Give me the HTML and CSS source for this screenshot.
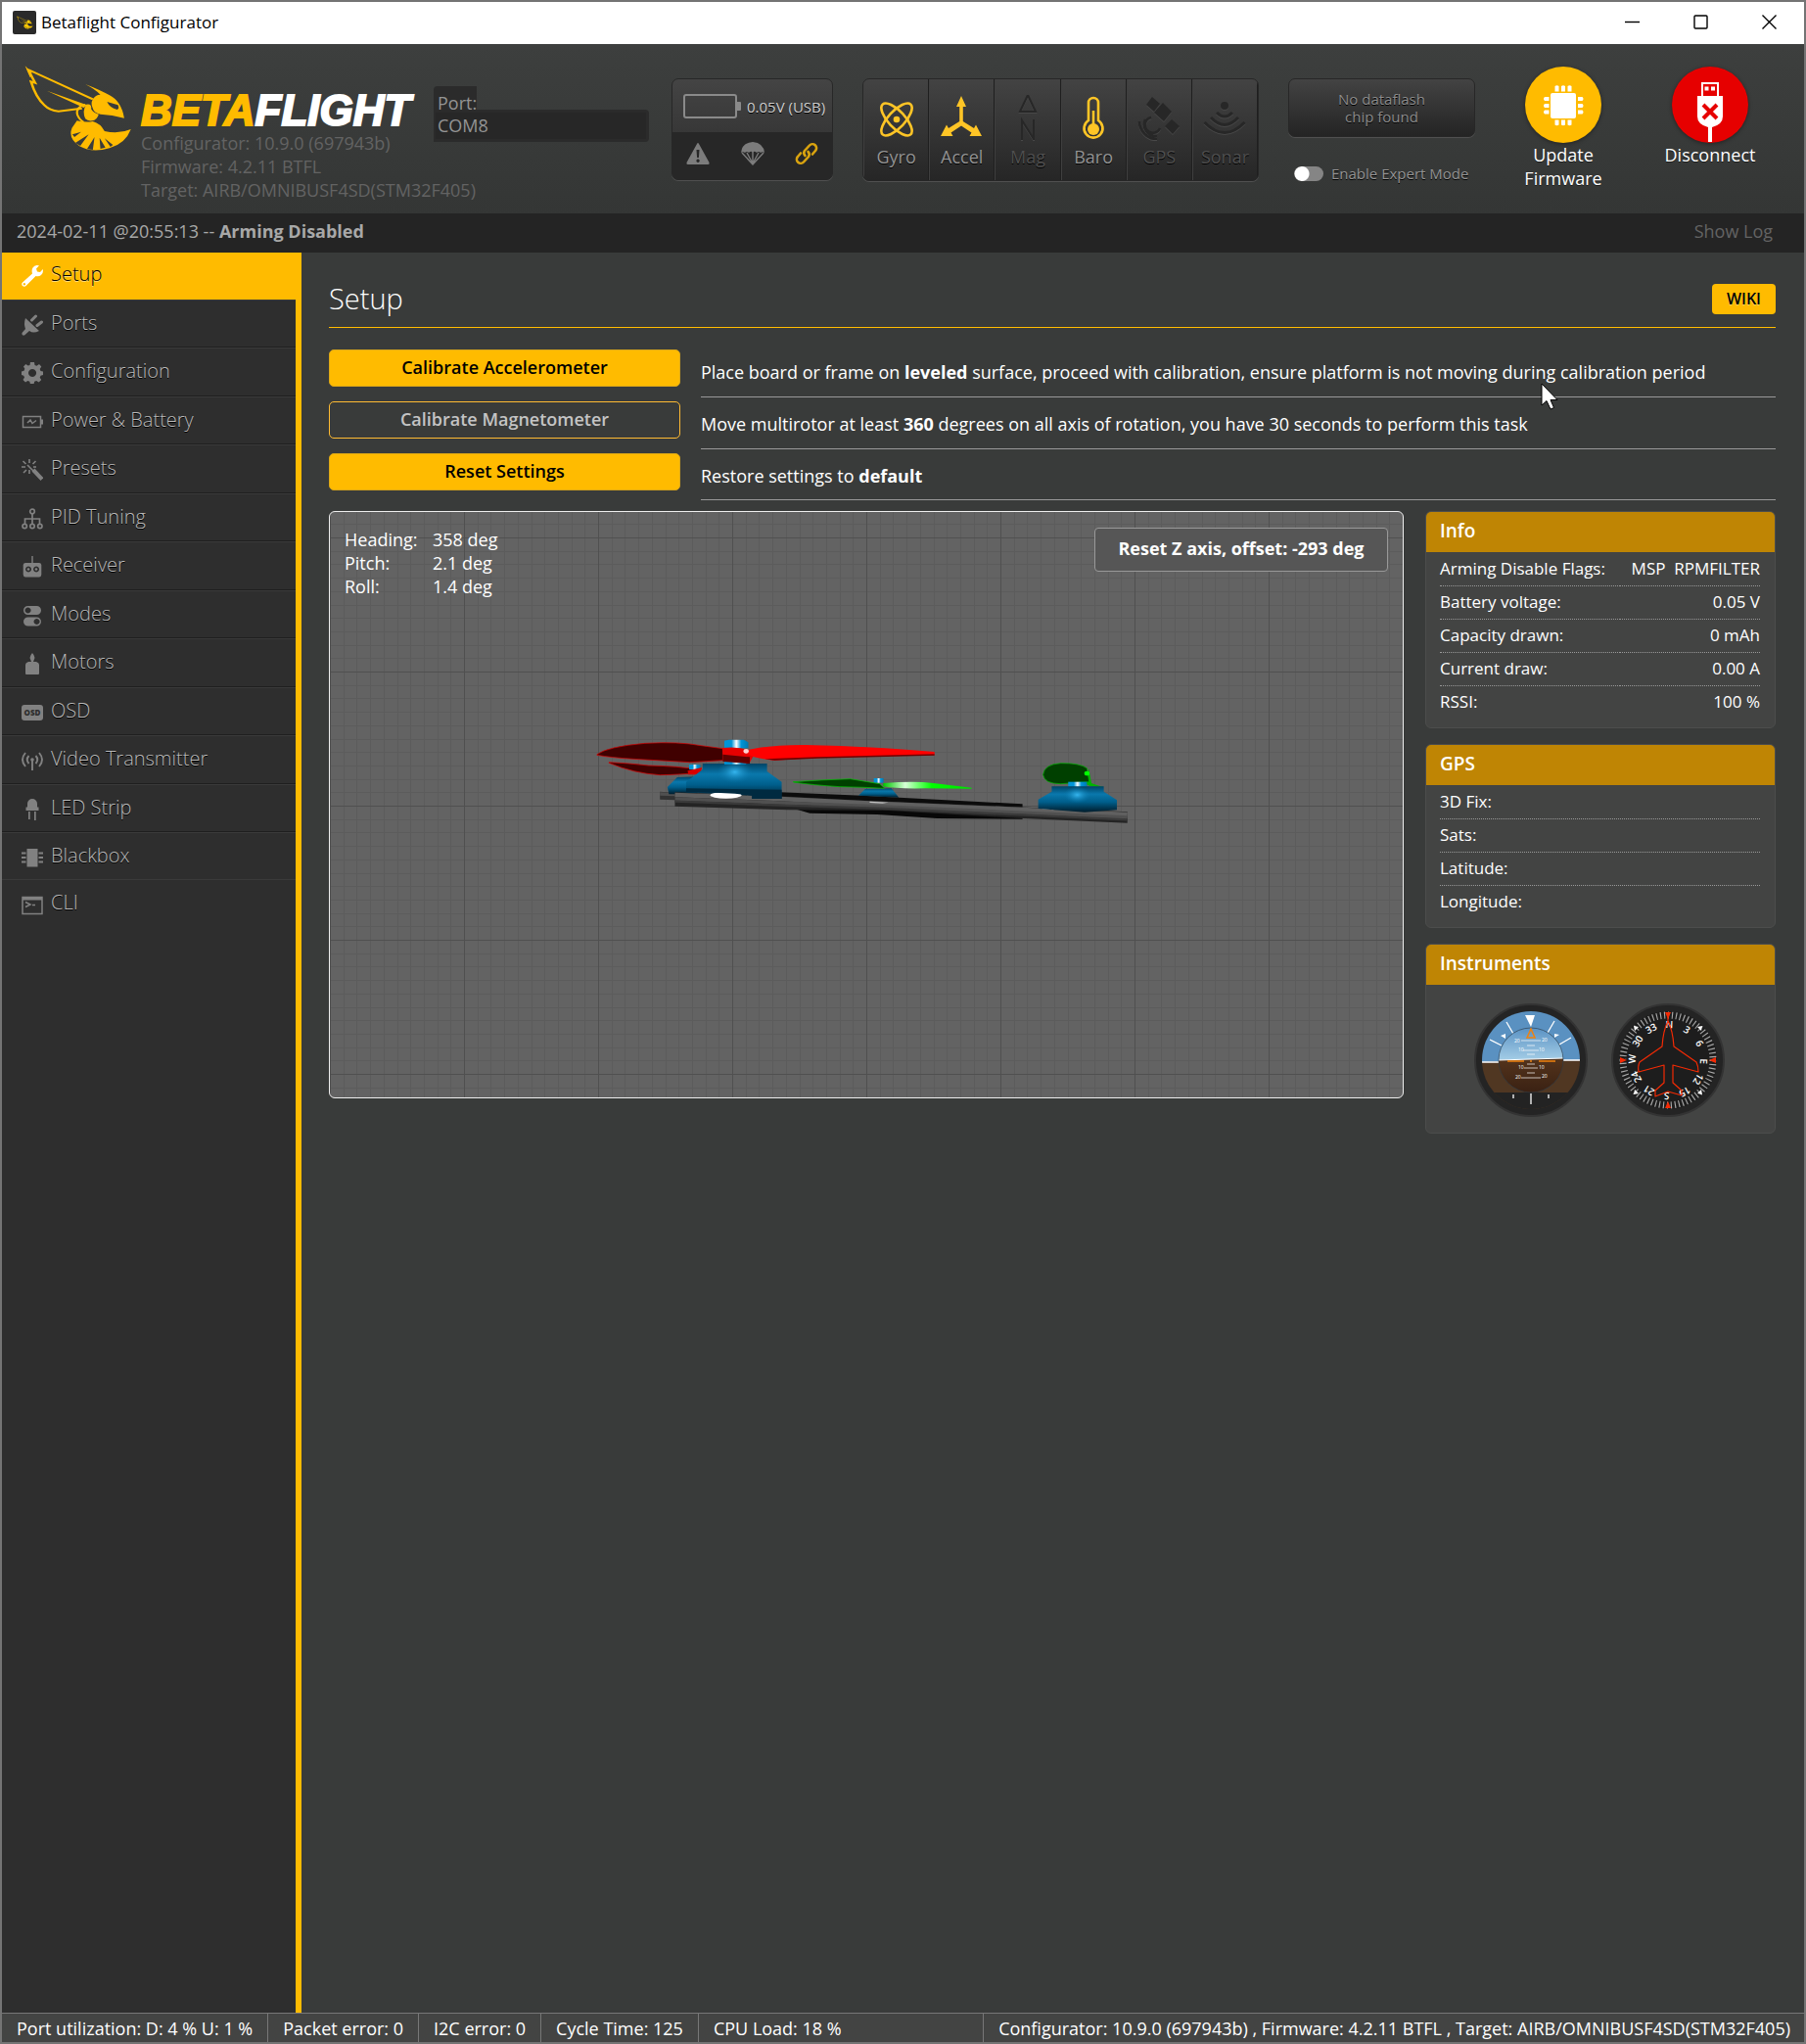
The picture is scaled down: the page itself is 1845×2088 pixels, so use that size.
FILE: index.html
```html
<!DOCTYPE html>
<html lang="en">
<head>
<meta charset="utf-8">
<meta name="viewport" content="width=device-width, initial-scale=1">
<title>Betaflight Configurator</title>
<link rel="stylesheet" href="styles.css">
</head>
<body>
<svg class="defs" aria-hidden="true">
  <symbol id="bee" viewBox="0 0 112 90">
    <g transform="translate(-24 -66) scale(.4273 .33333)">
      <path fill="none" stroke="currentColor" stroke-width="6" d="M67 213L84 254L74 250Q86 300 106 322Q118 338 140 341L196 332M67 213L222 304"/>
      <path d="M60 202L76 222L72 238ZM112 278L208 322L200 330ZM204 258Q240 276 262 292Q290 310 297 362Q268 352 240 350Q224 345 222 332Q216 318 222 304Q228 290 240 290Q228 274 204 258Z"/>
      <path d="M206 320Q220 316 218 334Q222 346 236 350Q232 368 220 370Q210 372 204 364Q196 340 206 320Z"/>
      <path fill="none" stroke="currentColor" stroke-width="5" d="M204 320Q180 328 185 352Q190 368 200 374"/>
      <path d="M184 370Q206 376 222 372Q240 378 250 402Q284 412 313 396Q300 440 262 454Q220 470 190 448Q162 424 172 392Z"/>
      <g class="bee-gap"><path d="M256 312L282 322Q286 334 280 336Q262 330 256 312ZM173 412L194 404L178 420ZM180 438L212 412L192 447ZM208 457L226 420L222 459ZM240 456L238 422L252 452ZM264 450L250 424L270 444Z"/></g>
    </g>
  </symbol>
</svg>

<div class="window">
  <div class="titlebar">
    <span class="app-icon"><svg width="17" height="14"><use href="#bee"/></svg></span>
    <span class="app-title">Betaflight Configurator</span>
    <div class="window-controls">
      <button type="button" aria-label="Minimize"><svg width="16" height="16" viewBox="0 0 16 16"><path d="M0 7.5h15"/></svg></button>
      <button type="button" aria-label="Maximize"><svg width="16" height="16" viewBox="0 0 16 16"><rect x="1" y="1" width="13" height="13" rx="1"/></svg></button>
      <button type="button" aria-label="Close"><svg width="16" height="16" viewBox="0 0 16 16"><path d="M.5.5l14 14M14.500.5l-14 14"/></svg></button>
    </div>
  </div>

  <header class="header">
    <div class="brand">
      <svg class="bee" width="112" height="90"><use href="#bee"/></svg>
      <div class="brand-text">
        <div class="wordmark">BETA<span>FLIGHT</span></div>
        <div class="version">Configurator: 10.9.0 (697943b)<br>Firmware: 4.2.11 BTFL<br>Target: AIRB/OMNIBUSF4SD(STM32F405)</div>
      </div>
    </div>

    <div class="port">
      <label for="port">Port:</label>
      <input id="port" type="text" value="COM8" readonly>
    </div>

    <div class="status">
      <div class="battery">
        <div class="battery-top">
          <svg width="60" height="28" viewBox="0 0 60 28"><rect x="2" y="2" width="53" height="23" rx="2" fill="none" stroke="#8a8a8a" stroke-width="2"/><path fill="#8a8a8a" d="M56 9h3q1 0 1 1v7q0 1-1 1h-3z"/></svg>
          <span>0.05V (USB)</span>
        </div>
        <div class="battery-bottom">
          <svg width="24" height="24" viewBox="0 0 24 24" fill="#7c7c7c"><path fill-rule="evenodd" d="M11 2q1-2 2 0l10.500 19q.5 2-1 2h-21q-1.500 0-1-2zM10.500 8l.6 8h1.800l.6-8zM12 17.500a1.700 1.700 0 1 0 .1 0z"/></svg>
          <svg width="24" height="24" viewBox="0 0 24 24" fill="#7c7c7c"><path d="M0 11Q1 1 12 0Q23 1 24 11Q22 9.500 20 11Q18 9 16 11Q14 9 12 10.500Q10 9 8 11Q6 9 4 11Q2 9.500 0 11Z"/><path fill="none" stroke="#7c7c7c" stroke-width="1.400" d="M1 11L12 23L23 11M6 11L12 22M18 11L12 22M12 10v13"/></svg>
          <svg width="24" height="24" viewBox="0 0 24 24" fill="none" stroke="#d9a30f" stroke-width="2.600" stroke-linecap="round"><path d="M10.500 14a4 4 0 0 1-.5-5l5-5.500a4 4 0 0 1 6 5.500l-3 3.500"/><path d="M13.500 10a4 4 0 0 1 .5 5l-5 5.500a4 4 0 0 1-6-5.500l3-3.500"/></svg>
        </div>
      </div>

      <ul class="sensors">
        <li class="on"><svg viewBox="0 0 44 46" fill="none" stroke="currentColor" stroke-width="2.600"><ellipse cx="22" cy="25" rx="8.500" ry="21" transform="rotate(43 22 25)"/><ellipse cx="22" cy="25" rx="8.500" ry="21" transform="rotate(-43 22 25)"/><circle cx="22" cy="25" r="3.300" fill="currentColor" stroke="none"/></svg>Gyro</li>
        <li class="on"><svg viewBox="0 0 44 46" fill="currentColor"><path d="M21 1L26 12H22.800V27L34 34L36 30.500L42 42H29.500L31.500 38.500L21 31.500L10.500 38.500L12.500 42H0L6 30.500L8 34L19.200 27V12H16Z"/></svg>Accel</li>
        <li><svg viewBox="0 0 44 46" fill="none" stroke="currentColor" stroke-width="2"><path d="M22 0L30 17H14ZM16 46V26L28 45V25"/></svg>Mag</li>
        <li class="on"><svg viewBox="0 0 44 46" fill="none" stroke="currentColor" stroke-width="2.600"><path d="M17 8a5 5 0 0 1 10 0V26a9.500 9.500 0 1 1-10 0Z"/><path d="M22 16V30"/><circle cx="22" cy="35" r="6" fill="currentColor" stroke="none"/></svg>Baro</li>
        <li><svg viewBox="0 0 44 46" fill="currentColor"><path d="M15 2L23 9L17 17L9 10ZM26 8L35 17L27 27L17 18ZM35 25L43 32L36 40L28 32Z"/><path fill="none" stroke="currentColor" stroke-width="2.600" d="M14 23a8 8 0 1 0 9 11M8 25a12 12 0 0 0 12 17M2 27a18 18 0 0 0 18 18"/></svg>GPS</li>
        <li><svg viewBox="0 0 44 46" fill="none" stroke="currentColor" stroke-width="3"><circle cx="22" cy="11" r="4" fill="currentColor" stroke="none"/><path d="M14 18Q22 26 30 18M8 23Q22 38 36 23M1.500 28Q22 49 42.500 28"/></svg>Sonar</li>
      </ul>

      <div class="dataflash">
        <div class="dataflash-box">No dataflash<br>chip found</div>
        <label class="expert"><input type="checkbox"> <span>Enable Expert Mode</span></label>
      </div>

      <button type="button" class="round-action">
        <svg width="78" height="78" viewBox="0 0 78 78"><circle cx="39" cy="39" r="39" fill="#ffbb00"/><g fill="#fff"><rect x="26" y="27" width="26" height="26" rx="2"/><path d="M30.500 20q2-1.500 4 0v5.500h-4zM37 20q2-1.500 4 0v5.500h-4zM43.500 20q2-1.500 4 0v5.500h-4zM30.500 59.500q2 1.500 4 0v-5h-4zM37 59.500q2 1.500 4 0v-5h-4zM43.500 59.500q2 1.500 4 0v-5h-4zM20 31q-2 2 0 4h4.500v-4zM20 38q-2 2 0 4h4.500v-4zM20 44.500q-2 2 0 4h4.500v-4zM58.500 31q2 2 0 4h-4.500v-4zM58.500 38q2 2 0 4h-4.500v-4zM58.500 44.500q2 2 0 4h-4.500v-4z"/></g></svg>
        Update<br>Firmware
      </button>
      <button type="button" class="round-action">
        <svg width="78" height="78" viewBox="0 0 78 78"><circle cx="39" cy="39" r="39" fill="#e60000"/><g fill="#fff"><path fill-rule="evenodd" d="M30 16h18v14h-18zM32 18v12h14v-12z"/><path d="M33.500 20.500h4v4h-4zM40 20.500h4v4h-4z"/><path d="M26 30h26v21q0 8-11 11v15h-4v-15q-11-3-11-11z"/></g><path stroke="#e60000" stroke-width="4" d="M32 39l14 14M46 39l-14 14"/></svg>
        Disconnect
      </button>
    </div>
  </header>

  <div class="log">
    <p>2024-02-11 @20:55:13 -- <strong>Arming Disabled</strong></p>
    <a href="#log">Show Log</a>
  </div>

  <div class="workspace">
    <nav class="tabs">
      <ul>
        <li class="active"><a href="#setup"><svg viewBox="0 0 22 22"><path fill-rule="evenodd" d="M15.500 0L18 .3L15 3.500L16 6.500L19 7L21.800 4Q22.500 8 20 10Q17.500 12 14.500 11L4.500 21Q3 22.500 1 21Q-.5 19 1 17.500L11 8.500Q10 5 11.500 2.500Q13 .2 15.500 0ZM2.800 18a1.200 1.200 0 1 0 .1 0z"/></svg>Setup</a></li>
        <li><a href="#ports"><svg viewBox="0 0 22 22"><path d="M4 4L18 17Q12 20 8 17L3 21.500Q0 22 .5 19L4 15Q2 10 4 4Z"/><path fill="none" stroke="currentColor" stroke-width="3" stroke-linecap="round" d="M10.500 6L14.500 2M16 11.500L20.500 8"/></svg>Ports</a></li>
        <li><a href="#configuration"><svg viewBox="0 0 22 22"><path fill-rule="evenodd" d="M9 0h4l.5 3 2 .8L18 2l2.300 2.500-1.600 2.500.8 2 2.500.5v3.500l-2.500.7-.8 2 1.500 2.300-2.500 2.500-2.500-1.500-2 .8-.7 2.700h-3.500l-.7-2.700-2-.8-2.300 1.500-2.500-2.500 1.500-2.500-.8-1.800L0 13V9.500l2.500-.7.8-2L2 4.500 4.300 2l2.400 1.600 1.800-.7zM11 7a4 4 0 1 0 .1 0z"/></svg>Configuration</a></li>
        <li><a href="#power"><svg viewBox="0 0 22 22"><path fill="none" stroke="currentColor" stroke-width="1.500" d="M1.500 5.500h18v11h-18zM6 12l3-3 2 3.500 4-3"/><path d="M20 8.500h2v5h-2z"/></svg>Power &amp; Battery</a></li>
        <li><a href="#presets"><svg viewBox="0 0 22 22"><path fill="none" stroke="currentColor" stroke-width="4" d="M12 11L21 20.500"/><path fill="none" stroke="currentColor" stroke-width="1.600" d="M6 6l6 6M8 0v4M1.500 2l3 3M14.500 2l-3 3M0 8h4M2 14l3-3M12 8h3M8 11v4"/></svg>Presets</a></li>
        <li><a href="#pid"><svg viewBox="0 0 22 22" fill="none" stroke="currentColor" stroke-width="1.700"><circle cx="11" cy="3.500" r="2.300"/><circle cx="3.200" cy="18.500" r="2.200"/><circle cx="11" cy="18.500" r="2.200"/><circle cx="18.800" cy="18.500" r="2.200"/><path d="M11 6v10M3.500 16v-5h15v5"/></svg>PID Tuning</a></li>
        <li><a href="#receiver"><svg viewBox="0 0 22 22"><path d="M10.300 0h1.400v8h-1.400z"/><path fill-rule="evenodd" d="M4 7h14q2 0 2.300 2v10q-.3 2.500-2.300 2.500h-14q-2 0-2.300-2.500v-10q.3-2 2.300-2zM7 10.500a3 3 0 1 0 .1 0zM15 10.500a3 3 0 1 0 .1 0z"/><circle cx="7" cy="13.500" r="1.300"/><circle cx="15" cy="13.500" r="1.300"/></svg>Receiver</a></li>
        <li><a href="#modes"><svg viewBox="0 0 22 22"><path fill-rule="evenodd" d="M6.500 1h9a4.500 4.500 0 0 1 0 9h-9a4.500 4.500 0 0 1 0-9zM6.500 2.500a3 3 0 1 0 .1 0zM6.500 12.500h9a4.500 4.500 0 0 1 0 9h-9a4.500 4.500 0 0 1 0-9zM15.500 14a3 3 0 1 0 .1 0z"/></svg>Modes</a></li>
        <li><a href="#motors"><svg viewBox="0 0 22 22"><path d="M11 0q2 2 2.500 5l-1.500 4h3q3 1 3 3v9q0 1-1 1h-12q-1 0-1-1v-9q0-2 3-3h3l-1.500-4q.5-3 2.500-5z"/></svg>Motors</a></li>
        <li><a href="#osd"><svg viewBox="0 0 22 22"><rect x="0" y="3" width="22" height="16" rx="3"/><text class="osd-text" x="11" y="14" text-anchor="middle">OSD</text></svg>OSD</a></li>
        <li><a href="#vtx"><svg viewBox="0 0 22 22" fill="none" stroke="currentColor" stroke-width="1.900"><circle cx="11" cy="10" r="1.800" fill="currentColor" stroke="none"/><path d="M11 10v11M7.500 6q-3.500 4 0 8M14.500 6q3.500 4 0 8M4 3q-6 7 0 14M18 3q6 7 0 14"/></svg>Video Transmitter</a></li>
        <li><a href="#led"><svg viewBox="0 0 22 22"><path d="M6 8.500V5a5 5 0 0 1 10 0V8.500h1.500V12h-13V8.500zM7 13h1.700v8h-1.700zM13 13h1.700v9h-1.700z"/></svg>LED Strip</a></li>
        <li><a href="#blackbox"><svg viewBox="0 0 22 22"><path d="M5.500 2h11v18.500h-11z"/><path fill="none" stroke="currentColor" stroke-width="2" d="M0 6.500h4.500M0 11h4.500M0 15.500h4.500M17.500 6.500h4.500M17.500 11h4.500M17.500 15.500h4.500"/></svg>Blackbox</a></li>
        <li><a href="#cli"><svg viewBox="0 0 22 22"><path fill="none" stroke="currentColor" stroke-width="1.500" d="M1 3.500h20v17h-20zM4 8.500l5 2.500-5 2.500M11 11.500h3"/><path d="M1 3h20v3.500h-20z"/></svg>CLI</a></li>
      </ul>
    </nav>

    <main class="content">
      <div class="page-head">
        <h1>Setup</h1>
        <a class="wiki" href="#wiki">WIKI</a>
      </div>

      <div class="actions">
        <button type="button" class="btn">Calibrate Accelerometer</button>
        <p>Place board or frame on <strong>leveled</strong> surface, proceed with calibration, ensure platform is not moving during calibration period</p>
        <button type="button" class="btn btn-disabled" disabled>Calibrate Magnetometer</button>
        <p>Move multirotor at least <strong>360</strong> degrees on all axis of rotation, you have 30 seconds to perform this task</p>
        <button type="button" class="btn">Reset Settings</button>
        <p>Restore settings to <strong>default</strong></p>
      </div>

      <div class="columns">
        <section class="model">
          <svg class="drone" width="600" height="200" viewBox="0 0 600 200">
            <defs>
              <linearGradient id="motor" x1="0" x2="0" y1="0" y2="1"><stop offset="0" stop-color="#004466"/><stop offset=".3" stop-color="#0a78ac"/><stop offset=".6" stop-color="#005f8c"/><stop offset="1" stop-color="#001c2b"/></linearGradient>
              <radialGradient id="shine"><stop offset="0" stop-color="#35b5ee"/><stop offset="1" stop-color="#0a78ac" stop-opacity="0"/></radialGradient>
              <linearGradient id="nut"><stop offset="0" stop-color="#0095d8"/><stop offset=".3" stop-color="#0095d8"/><stop offset=".5" stop-color="#fff"/><stop offset=".7" stop-color="#0095d8"/><stop offset="1" stop-color="#0079b0"/></linearGradient>
              <linearGradient id="green"><stop offset="0" stop-color="#00c800"/><stop offset=".25" stop-color="#d8ffd8"/><stop offset=".55" stop-color="#00ff00"/><stop offset="1" stop-color="#00e000"/></linearGradient>
            </defs>
            <g transform="translate(5 8) scale(.38265 .33333)">
              <path fill="#333" d="M220 236L262 240V262L220 260Z"/><path fill="#505050" d="M220 238L262 241V250L220 248Z"/>
              <path fill="#400000" stroke="#d80000" stroke-width="2" d="M84 146Q130 148 190 156Q270 158 322 168V178Q280 184 220 185Q150 180 84 148Z"/>
              <path fill="url(#nut)" d="M298 153h30v15h-30z"/><path fill="#d80000" d="M294 172L332 162L328 184H296Z"/>
              <path fill="url(#motor)" d="M266 192L320 190V244H244L240 222Z"/>
              <path fill="#0c0c0c" d="M540 238L760 248L1188 274V284L1000 276L540 254Z"/>
              <path fill="url(#motor)" d="M768 228L838 226L858 254L750 248Z"/><path fill="url(#nut)" d="M791 195h26v14h-26z"/>
              <path fill="#004000" stroke="#00c000" stroke-width="2" d="M576 206Q650 200 728 197L806 212L820 226Q760 222 700 221Q630 216 576 207Z"/>
              <path fill="url(#green)" d="M816 210Q900 202 950 210L1052 224V227L930 226Q850 228 816 220Z"/>
              <path fill="#080808" d="M560 282L940 292L1188 308V320L960 318L800 306L620 302Z"/>
              <path fill="#242424" d="M260 238L540 250L780 264L1200 284L1468 298V332L1190 318L830 294L560 292L260 281Z"/>
              <g fill="none"><path stroke="#606060" stroke-width="14" d="M260 246L540 258L780 272L1200 292L1468 306"/><path stroke="#505050" stroke-width="10" d="M260 258L540 270L780 280L1200 301L1468 315"/><path stroke="#3a3a3a" stroke-width="7" d="M260 266L540 278L800 287L1200 308L1468 322"/></g>
              <path fill="#d8d8d8" opacity=".8" d="M780 266l50 3-16 3-34-2zM1240 286l40 3-10 3-30-3z"/>
              <path fill="#00b400" d="M1365 165L1372 210Q1390 218 1404 222L1370 220L1356 212Z"/>
              <path fill="#004000" stroke="#00b400" stroke-width="2" d="M1243 184Q1246 152 1290 149Q1340 148 1360 164L1366 206L1290 212Q1246 212 1243 184Z"/><circle cx="1360" cy="180" r="7" fill="#00ff00"/>
              <path fill="url(#nut)" d="M1310 206h50v16h-50z"/>
              <path fill="url(#motor)" d="M1266 220H1405V236L1440 262V292L1354 299L1230 288V260L1266 236Z"/><ellipse cx="1334" cy="246" rx="36" ry="26" fill="url(#shine)"/>
              <path fill="url(#motor)" d="M334 150H506V174L545 206V258H466V248L290 238V206L334 168Z"/><ellipse cx="420" cy="176" rx="48" ry="34" fill="url(#shine)"/>
              <ellipse cx="396" cy="247" rx="42" ry="10" fill="#fff"/><path fill="#002a40" d="M290 226L545 230V258H466V248Q400 238 290 238Z"/>
              <path fill="url(#nut)" d="M392 144h58v8h-58zM392 80l12-3h40l12 8v18h-64z"/>
              <path fill="#400000" stroke="#d80000" stroke-width="2" d="M52 122Q80 98 180 88Q270 82 330 95L388 104V140L300 146L150 136Q90 132 52 124Z"/>
              <path fill="#e60000" d="M386 102Q430 96 460 110L470 126L458 150L390 142Z"/><path fill="#600000" d="M388 122L460 130V150L388 144Z"/>
              <path fill="#f00" d="M454 108Q520 92 610 93Q760 96 953 114V124L640 132L526 140Q470 134 454 120Z"/><path fill="#700000" d="M500 136L640 130L953 121V125L640 134L526 140Z"/><circle cx="450" cy="112" r="7" fill="#ffd0d0"/>
            </g>
          </svg>
          <dl class="attitude">
            <dt>Heading:</dt><dd>358 deg</dd>
            <dt>Pitch:</dt><dd>2.1 deg</dd>
            <dt>Roll:</dt><dd>1.4 deg</dd>
          </dl>
          <button type="button" class="reset-z">Reset Z axis, offset: -293 deg</button>
        </section>

        <aside class="side">
          <section class="panel">
            <h2>Info</h2>
            <table>
              <tr><th scope="row">Arming Disable Flags:</th><td>MSP&nbsp; RPMFILTER</td></tr>
              <tr><th scope="row">Battery voltage:</th><td>0.05 V</td></tr>
              <tr><th scope="row">Capacity drawn:</th><td>0 mAh</td></tr>
              <tr><th scope="row">Current draw:</th><td>0.00 A</td></tr>
              <tr><th scope="row">RSSI:</th><td>100 %</td></tr>
            </table>
          </section>
          <section class="panel">
            <h2>GPS</h2>
            <table>
              <tr><th scope="row">3D Fix:</th><td></td></tr>
              <tr><th scope="row">Sats:</th><td></td></tr>
              <tr><th scope="row">Latitude:</th><td></td></tr>
              <tr><th scope="row">Longitude:</th><td></td></tr>
            </table>
          </section>
          <section class="panel">
            <h2>Instruments</h2>
            <div class="dials">
              <svg width="120" height="120" viewBox="-60 -60 120 120">
                <defs>
                  <clipPath id="outer"><circle r="50"/></clipPath><clipPath id="inner"><circle r="33"/></clipPath>
                  <linearGradient id="sky" x1="0" x2="0" y1="0" y2="1"><stop offset="0" stop-color="#5a92c4"/><stop offset="1" stop-color="#a4cde6"/></linearGradient>
                  <linearGradient id="ground" x1="0" x2="0" y1="0" y2="1"><stop offset="0" stop-color="#54341c"/><stop offset="1" stop-color="#3a2113"/></linearGradient>
                </defs>
                <circle r="57" fill="#242424" stroke="#333" stroke-width="2"/>
                <g clip-path="url(#outer)">
                  <path fill="#5a91c1" d="M-50-50H50V0L-50 2Z"/><path fill="#503722" d="M-50 2L50 0V50H-50Z"/><path fill="#232323" d="M-50 33H50V50H-50Z"/>
                  <path stroke="#fff" stroke-width="1.500" d="M-50 2h17M33 0h17"/>
                  <g stroke="#fff" stroke-width="1.300"><path d="M-25-39l7 12M24-40l-7 12M-42-21l12 6M41-23l-12 7M0 34v11"/><path d="M-18 35v4M18 35v4"/></g>
                  <path fill="#fff" d="M-6-46h10l-4 12zM-31-25l5-2v5zM29-26l-5-1v4z"/>
                </g>
                <g clip-path="url(#inner)">
                  <path fill="url(#sky)" d="M-33-33H33V-2L-33 0Z"/><path fill="url(#ground)" d="M-33 0L33-2V33H-33Z"/>
                  <path stroke="#fff" stroke-width="1" d="M-33 0L33-2"/>
                  <path stroke="#fff" stroke-width=".7" d="M-10-20h20M-4-15h8M-8-10h16M-4-6h8M-4 4h8M-7 8h14M-4 13h8M-10 18h20"/>
                  <g class="pitch-text"><text x="-17" y="-18">20</text><text x="11" y="-19">20</text><text x="-13" y="-9">10</text><text x="8" y="-9">10</text><text x="-13" y="9">10</text><text x="8" y="9">10</text><text x="-16" y="19">20</text><text x="11" y="18">20</text></g>
                </g>
                <circle r="33" fill="none" stroke="#2b3b48" stroke-opacity=".6"/>
                <path stroke="#f0820f" stroke-width="1.500" fill="none" d="M-24 1h17M8 1h17M-1 1h2M0-32l-4 9h8z"/>
              </svg>
              <svg width="120" height="120" viewBox="-60 -60 120 120">
                <circle r="57" fill="#242424" stroke="#333" stroke-width="2"/><circle r="50" fill="#1d1d1d"/>
                <circle r="46" fill="none" stroke="#a8a8a8" stroke-width="7" pathLength="360" stroke-dasharray="1.400 3.600"/>
                <path fill="#fff" d="M-35-35l5 1-4 4zM35-35l-5 1 4 4zM-35 35l5-1-4-4zM35 35l-5-1 4-4z"/>
                <path fill="#f42a04" d="M-3-49h6L0-42zM-3 49h6L0 42zM-49-3v6L-42 0zM49-3v6L42 0z"/>
                <g class="compass-text" transform="rotate(2)"><text y="-33">N</text><text y="-33" transform="rotate(30)">3</text><text y="-33" transform="rotate(60)">6</text><text y="-33" transform="rotate(90)">E</text><text y="-33" transform="rotate(120)">12</text><text y="-33" transform="rotate(150)">15</text><text y="-33" transform="rotate(180)">S</text><text y="-33" transform="rotate(210)">21</text><text y="-33" transform="rotate(240)">24</text><text y="-33" transform="rotate(270)">W</text><text y="-33" transform="rotate(300)">30</text><text y="-33" transform="rotate(330)">33</text></g>
                <path fill="none" stroke="#f42a04" stroke-width="1.200" stroke-linejoin="round" d="M0-46V-40Q5-30 6-14L29 2Q31 6 31 12L5 5V23L14 31V36L0 32L-13 37V31L-4 23V5L-30 12Q-31 6-29 2L-6-14Q-5-30 0-40"/>
              </svg>
            </div>
          </section>
        </aside>
      </div>
    </main>
  </div>

  <footer class="statusbar">
    <span>Port utilization: D: 4 % U: 1 %</span><span>Packet error: 0</span><span>I2C error: 0</span><span>Cycle Time: 125</span><span>CPU Load: 18 %</span>
    <span class="build">Configurator: 10.9.0 (697943b) , Firmware: 4.2.11 BTFL , Target: AIRB/OMNIBUSF4SD(STM32F405)</span>
  </footer>
</div>
<svg class="cursor" width="20" height="28" viewBox="0 0 20 28" aria-hidden="true"><path fill="#fff" stroke="#000" d="M1 1V23L6 18.500L10 27L13.500 25.500L10 17.500H17Z"/></svg>
</body>
</html>
```
FILE: styles.css
```css
* { box-sizing: border-box; }

body {
  margin: 0;
  background: #393b3a;
  color: #fff;
  font: 18px/24px "Open Sans", "Noto Sans", sans-serif;
}

p, h1, h2, ul, dl, dd { margin: 0; padding: 0; }
ul { list-style: none; }
a { color: inherit; text-decoration: none; }
button, input { font: inherit; color: inherit; margin: 0; }
svg { display: block; }
svg:not([fill]) { fill: currentColor; }
strong { font-weight: 700; }
.defs { position: absolute; width: 0; height: 0; }

.window {
  display: flex;
  flex-direction: column;
  min-height: 100vh;
  border: 2px solid #747474;
}

/* Title bar */
.titlebar {
  display: flex;
  align-items: center;
  gap: 5px;
  height: 43px;
  padding: 0 0 2px 11px;
  background: #fff;
  color: #000;
}
.app-icon {
  display: grid;
  place-items: center;
  width: 24px;
  height: 24px;
  border-radius: 2px;
  background: #2a2a2a;
  color: #ffcc00;
}
.app-title { font-size: 17px; }
.window-controls { display: flex; margin-left: auto; }
.window-controls button {
  display: grid;
  place-items: center;
  width: 70px;
  height: 41px;
  padding: 0;
  border: 0;
  background: none;
}
.window-controls svg { fill: none; stroke: #000; stroke-width: 1.4; }

/* Header */
.header {
  display: flex;
  align-items: flex-start;
  min-height: 173px;
  padding: 21px 36px 0 22px;
  background: linear-gradient(#3d3f3e, #343635);
}
.brand { display: flex; gap: 8px; width: 419px; white-space: nowrap; }
.bee { flex: none; color: #ffbb00; }
.bee-gap { fill: #3a3c3b; }
.brand-text { padding-top: 26px; }
.wordmark {
  color: #ffbb00;
  font: italic 700 44px/42px "Liberation Sans", Arial, sans-serif;
  -webkit-text-stroke: 2px currentColor;
}
.wordmark span { color: #fff; -webkit-text-stroke-color: #fff; }
.version { color: #636363; }

.port { display: flex; flex-direction: column; align-items: flex-start; margin-top: 22px; color: #949494; }
.port label { padding: 5px 0 0 4px; height: 24px; background: #2b2b2b; border-radius: 4px 0 0; line-height: 24px; }
.port input {
  width: 220px;
  height: 33px;
  padding: 0 2px 1px;
  border: 3px solid #2b2b2b;
  border-left-width: 2px;
  border-radius: 0 4px 4px 0;
  background: #272727;
  outline: 0;
}

.status { display: flex; align-items: flex-start; gap: 30px; margin-left: auto; }
.battery, .sensors, .dataflash-box {
  border: 1px solid #272727;
  border-radius: 7px;
  box-shadow: 0 1px 0 #505050;
  overflow: hidden;
}
.battery { width: 165px; height: 104px; margin-top: 14px; background: linear-gradient(#444, #2c2c2c); }
.battery-top {
  display: flex;
  align-items: center;
  gap: 6px;
  height: 54px;
  padding: 1px 0 0 10px;
  color: #d0d0d0;
  font-size: 15px;
  text-shadow: 0 1px #000;
  white-space: nowrap;
}
.battery-bottom { display: flex; justify-content: space-between; height: 50px; padding: 10px 14px; background: #272727; }
.sensors { display: flex; width: 405px; height: 105px; margin-top: 14px; background: linear-gradient(#434343, #262626); }
.sensors li {
  flex: 1;
  padding-top: 16px;
  border-left: 1px solid #3f3f3f;
  border-right: 1px solid #1f1f1f;
  color: #4f4f4f;
  text-align: center;
  line-height: 22px;
  text-shadow: 0 1px #000;
}
.sensors svg { width: 44px; height: 46px; margin: 0 auto 6px; color: #272727; filter: drop-shadow(0 1px 0 #484848); }
.sensors .on { color: #949494; }
.sensors .on svg { color: #ffc526; filter: none; }

.dataflash { width: 191px; margin-top: 14px; }
.dataflash-box {
  padding: 11px 0;
  background: linear-gradient(#434343, #242424);
  color: #8c8c8c;
  font-size: 15px;
  line-height: 18px;
  text-align: center;
  text-shadow: 0 1px #000;
}
.expert { display: flex; align-items: center; gap: 8px; margin-top: 25px; padding-left: 6px; color: #949494; font-size: 15px; text-shadow: 0 1px #000; white-space: nowrap; }
.expert input {
  appearance: none;
  width: 30px;
  height: 15px;
  border-radius: 8px;
  background: radial-gradient(circle at 8px 50%, #fff 7px, #858585 8px);
}

.round-action { width: 120px; padding: 0; border: 0; background: none; text-align: center; text-shadow: 0 1px rgba(0, 0, 0, .5); }
.round-action svg { margin: 2px auto 0; filter: drop-shadow(0 1px 2px rgba(0, 0, 0, .4)); }

/* Log strip */
.log {
  display: flex;
  justify-content: space-between;
  padding: 6px 32px 10px 15px;
  background: #242424;
  color: #a8a8a8;
}
.log a { color: #636363; }

/* Workspace */
.workspace { display: flex; flex: 1; }
.tabs { flex: none; width: 306px; border-right: 6px solid #ffbb00; background: #2e2e2e; }
.tabs li { height: 50px; border-top: 1px solid #3a3a3a; border-bottom: 1px solid #1f1f1f; color: #bababa; }
.tabs li:nth-child(even) { height: 49px; }
.tabs a { display: flex; gap: 8px; padding: 10px 0 0 20px; font-size: 20px; font-weight: 300; line-height: 26px; text-shadow: 0 1px #000; }
.tabs svg { flex: none; width: 22px; height: 22px; margin-top: 4px; color: #818181; }
.tabs li.active { height: 48px; border: 0; background: #ffbb00; color: #000; }
.tabs .active a { height: 48px; margin-right: -6px; padding-top: 9px; background: #ffbb00; text-shadow: 0 1px rgba(255, 255, 255, .5); }
.tabs .active svg { color: #fff; }
.tabs li:nth-last-child(2) { height: 48px; }
.tabs li:nth-last-child(-n+2) { border-bottom-color: #2e2e2e; }
.osd-text { fill: #2e2e2e; font-size: 8px; font-weight: 800; text-shadow: none; }

.content { flex: 1; min-width: 0; padding: 28px 29px 40px 28px; }
.page-head { display: flex; justify-content: space-between; align-items: flex-start; height: 49px; border-bottom: 1px solid #ffbb00; }
.page-head h1 { font-size: 29px; font-weight: 300; line-height: 38px; }
.wiki {
  margin-top: 4px;
  padding: 0 15px;
  border-radius: 4px;
  background: #ffbb00;
  color: #000;
  font-size: 16px;
  font-weight: 600;
  line-height: 31px;
  text-shadow: 0 1px rgba(255, 255, 255, .4);
}

.actions { display: grid; grid-template-columns: 359px 1fr; column-gap: 21px; padding-top: 18px; }
.btn {
  height: 38px;
  margin-top: 4px;
  padding: 0 0 2px;
  border: 1px solid #dba718;
  border-radius: 5px;
  background: #ffbb00;
  color: #000;
  font-weight: 600;
  line-height: 34px;
}
.btn-disabled { background: none; border-color: #ffbb33; color: #c4c4c4; }
.actions p { height: 53px; padding-top: 15px; border-bottom: 1px solid #999; }
.actions p:last-child { height: 52px; }

.columns { display: grid; grid-template-columns: 1fr 358px; column-gap: 22px; align-items: start; margin-top: 11px; }
.model {
  display: grid;
  place-items: center;
  position: relative;
  aspect-ratio: 183 / 100;
  border: 1px solid #eee;
  border-radius: 6px;
  background: #636363 url("data:image/svg+xml,%3Csvg xmlns='http://www.w3.org/2000/svg' width='137' height='137'%3E%3Cpath fill='none' stroke='%235c5c5c' d='M14.500 0v137M27.500 0v137M41.500 0v137M55.500 0v137M69.500 0v137M82.500 0v137M96.500 0v137M110.500 0v137M123.500 0v137M0 14.500h137M0 27.500h137M0 41.500h137M0 55.500h137M0 69.500h137M0 82.500h137M0 96.500h137M0 110.500h137M0 123.500h137'/%3E%3Cpath fill='none' stroke='%23505050' d='M.5 0v137M0 .5h137'/%3E%3C/svg%3E") 0 26px;
}
.attitude {
  position: absolute;
  top: 16px;
  left: 15px;
  display: grid;
  grid-template-columns: 90px auto;
}
.reset-z {
  position: absolute;
  top: 16px;
  right: 15px;
  height: 45px;
  width: 300px;
  padding: 0 0 3px;
  border: 1px solid #999;
  border-radius: 4px;
  background: #565656;
  font-weight: 700;
}

.side { display: grid; gap: 16px; }
.panel { border: 1px solid #4c4d4c; border-radius: 6px; background: #434443; overflow: hidden; }
.panel h2 { height: 41px; padding: 0 14px; background: #bf8504; font-size: 19px; font-weight: 600; line-height: 39px; }
.panel table { width: calc(100% - 29px); margin: 0 15px 9px 14px; border-collapse: collapse; font-size: 17px; line-height: 23px; }
.panel th, .panel td { height: 34px; padding: 0 0 1px; border-bottom: 1px dotted #999; font-weight: 400; text-align: left; }
.panel td { text-align: right; }
.panel tr:last-child > * { border: 0; }
.dials { display: flex; justify-content: center; gap: 20px; padding: 17px 3px 14px 0; }
.pitch-text { fill: #fff; font-size: 5px; }
.compass-text { fill: #fff; font-size: 10px; font-weight: 600; text-anchor: middle; }

/* Status bar */
.statusbar { display: flex; height: 30px; border-top: 1px solid #777; background: #434443; white-space: nowrap; line-height: 30px; }
.statusbar span { padding: 0 15px; border-right: 1px solid #777; }
.statusbar span:nth-child(5) { border: 0; }
.statusbar .build { margin-left: auto; padding-right: 14px; border: 0; border-left: 1px solid #777; }

.cursor { position: absolute; left: 1574px; top: 391px; }
```
